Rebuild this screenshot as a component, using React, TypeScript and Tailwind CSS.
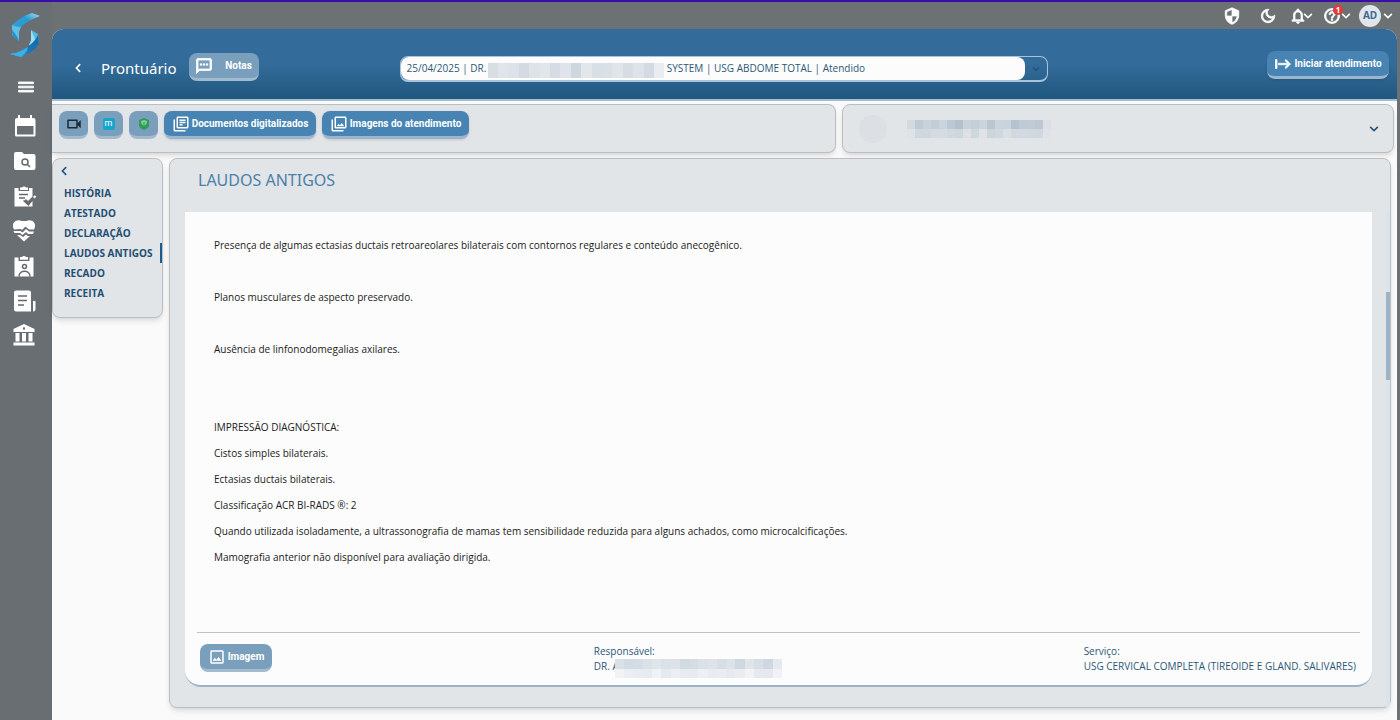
import type { ReactNode } from "react";
import { FaChevronDown, FaChevronLeft } from "react-icons/fa";
import {
  MdHelpOutline,
  MdMenu,
  MdNotificationsNone,
  MdOutlineDarkMode,
  MdOutlineImage,
  MdOutlineLibraryBooks,
  MdOutlinePhotoLibrary,
  MdOutlineSms,
  MdOutlineVideocam,
  MdSecurity,
  MdStart,
} from "react-icons/md";

const sections = ["HISTÓRIA", "ATESTADO", "DECLARAÇÃO", "LAUDOS ANTIGOS", "RECADO", "RECEITA"];

const report = [
  "Presença de algumas ectasias ductais retroareolares bilaterais com contornos regulares e conteúdo anecogênico.",
  "",
  "Planos musculares de aspecto preservado.",
  "",
  "Ausência de linfonodomegalias axilares.",
  "",
  "",
  "IMPRESSÃO DIAGNÓSTICA:",
  "Cistos simples bilaterais.",
  "Ectasias ductais bilaterais.",
  "Classificação ACR BI-RADS ®: 2",
  "Quando utilizada isoladamente, a ultrassonografia de mamas tem sensibilidade reduzida para alguns achados, como microcalcificações.",
  "Mamografia anterior não disponível para avaliação dirigida.",
];

// hidden names are drawn as rows of tinted blocks
const selectMask = [
  ["#d9dee4", "#dfe5ea", "#dce2e8", "#d3dae1", "#dde3e9", "#e1e6eb", "#d5dce3", "#dfe4ea", "#cfd7de", "#e2e7ec", "#d8dfe5", "#d9e0e6", "#e0e5ea", "#d6dde3", "#dde3e8", "#d3dae1", "#e9edf2"],
];

const patientMask = [
  ["#d3d9df", "#bfcad4", "#c9d2da", "#c3cdd7", "#cbd4dc", "#bcc8d3", "#b3c1ce", "#c9d2da", "#c5cfd8", "#cbd3db", "#bac7d2", "#cbd4dc", "#cad2da", "#b5c2cf", "#bfcad4", "#c1cbd5", "#bdc8d3", "#dce0e4"],
  ["#dfe3e7", "#cfd7df", "#cfd7df", "#d5dbe2", "#d4dbe1", "#d1d8df", "#ced6de", "#dde1e6", "#cfd7de", "#dfe3e7", "#ccd4dc", "#d0d8df", "#dbe0e5", "#d1d9e0", "#d2d9e0", "#d1d8df", "#d0d8df", "#dfe3e7"],
];

const doctorMask = [
  ["#d9e0e6", "#d3dbe2", "#d5dde4", "#dbe1e7", "#e0e5ea", "#dae1e7", "#dce2e8", "#d2dae1", "#d5dce3", "#dbe1e7", "#dde3e8", "#d7dee4", "#dce2e8", "#cfd8e0", "#e0e5ea", "#d7dee4", "#cfd8e0", "#e6eaee"],
  ["#f1f3f5", "#eceff2", "#e9edf1", "#e6ebef", "#f0f3f5", "#e5eaee", "#eceff2", "#e8ecf0", "#e7ebef", "#edf0f3", "#e8ecf0", "#e9edf0", "#e6eaee", "#e9edf0", "#f0f2f5", "#e6eaee", "#e4e9ed", "#f0f2f5"],
];

const Mask = ({ rows, className }: { rows: string[][]; className: string }) => (
  <div className={`flex flex-col ${className}`} aria-hidden="true">
    {rows.map((row, r) => (
      <div key={r} className="flex flex-1">
        {row.map((color, c) => (
          <span key={c} className="flex-1" style={{ backgroundColor: color }} />
        ))}
      </div>
    ))}
  </div>
);

const Logo = () => (
  <svg viewBox="0 0 32 46" className="h-[46px] w-8">
    <defs>
      <linearGradient id="logoTop" x1="0" y1="1" x2="1" y2="0">
        <stop offset="0" stopColor="#2b9fd8" />
        <stop offset="0.6" stopColor="#2a9ad2" />
        <stop offset="1" stopColor="#a3e1f5" />
      </linearGradient>
      <linearGradient id="logoBottom" x1="0" y1="1" x2="1" y2="0">
        <stop offset="0" stopColor="#4fc3f2" />
        <stop offset="0.4" stopColor="#1a7ab8" />
        <stop offset="1" stopColor="#1565a0" />
      </linearGradient>
    </defs>
    <path d="M30 3L22 0l-8 3-7 5-5 4v6l9-4c4-4 9-7 19-11z" fill="url(#logoTop)" />
    <path d="M2 12v10l7 6v-9l2-5c-3 0-6-1-9-2z" fill="#5dbfe6" />
    <path d="M2 17c3 3 5 6 7 11l-6-5c-1-2-1-4-1-6z" fill="#2391cb" />
    <path d="M21 17l7 4 1 9-2 4-8-2 2-5z" fill="#56bce6" />
    <path d="M21 17l4 9-1 5-5 1 2-4z" fill="#a0def4" />
    <path d="M28 21l1 10-5 6-5 3-8 4-11-3c9-1 14-4 19-8 4-4 8-7 9-12z" fill="url(#logoBottom)" />
    <path d="M0 41c8-1 13-4 18-7l-1 4-6 6z" fill="#36b2ea" />
  </svg>
);

const RailIcon = ({ children }: { children: ReactNode }) => (
  <svg viewBox="0 0 24 24" className="size-6" fill="#fff">
    {children}
  </svg>
);

const rail = [
  {
    label: "Agenda",
    icon: (
      <path
        fillRule="evenodd"
        d="M5 1h2v3h10V1h2v3h1.500a2 2 0 0 1 2 2v15a1.500 1.500 0 0 1-1.500 1.500H3.500A1.500 1.500 0 0 1 2 21V6a2 2 0 0 1 2-2h1zM4 12v8.500h16.500V12z"
      />
    ),
  },
  {
    label: "Pesquisar prontuários",
    icon: (
      <>
        <path d="M1 5a2 2 0 0 1 2-2h6l2 2h9.500a2 2 0 0 1 2 2v12a2 2 0 0 1-2 2H3a2 2 0 0 1-2-2z" />
        <path d="M12 10a3 3 0 1 1 0 6 3 3 0 0 1 0-6zm2.200 5.200L17 18" fill="none" stroke="#65696d" strokeWidth="1.500" />
      </>
    ),
  },
  {
    label: "Solicitações",
    icon: (
      <>
        <path d="M1.500 4h4v3H16V4h3.500v8.500L15 17l-2-2-2 2 4 4.500.500 1h-14zM7 3.500h2a2.500 2.500 0 0 1 4 0h2v2.500H7zM19.500 17v5.500H15z" />
        <path d="M6 10.500h9M6 14h6" fill="none" stroke="#65696d" strokeWidth="1.500" />
        <path d="M10.500 16.500l4 3.500 5-5" fill="none" stroke="#65696d" strokeWidth="1.500" />
        <path d="M20 13l1.800-1.800 1.500 1.500-1.800 1.800z" />
      </>
    ),
  },
  {
    label: "Sinais vitais",
    icon: (
      <>
        <path d="M1 10.500C-1 7 0 3 3 1.800c2-.800 3.800-.800 5.500.200h5c1.700-1 3.500-1 5.500-.200 3 1.200 4 5.200 2 8.700h-5l-3.500-3-3.500 3.500-1.500-1zM.500 12h7l2 1.500L13 10l3 2.500h5L20 15h-5l-2-2-3.500 3L7 14H1.500zM4 16h3l3 2 3-2.500 1.500 1.500H17L11 22.500z" />
      </>
    ),
  },
  {
    label: "Pacientes",
    icon: (
      <>
        <path d="M1.500 3.500h4V7h11V3.500h4v19h-19zM7 3h2a2.500 2.500 0 0 1 4 0h2v2.800H7z" />
        <circle cx="11.500" cy="12.500" r="2" fill="none" stroke="#65696d" strokeWidth="1.500" />
        <path d="M6 22.500c0-7 11-7 11 0" fill="none" stroke="#65696d" strokeWidth="1.500" />
      </>
    ),
  },
  {
    label: "Relatórios",
    icon: (
      <>
        <path d="M3 1.500h13a2 2 0 0 1 2 2v19H3a2 2 0 0 1-2-2v-17a2 2 0 0 1 2-2zM20 12h2.500v8a2.500 2.500 0 0 1-2.500 2.500z" />
        <path d="M5 7h9M5 11.500h9M5 16h6" stroke="#65696d" strokeWidth="1.500" />
      </>
    ),
  },
  {
    label: "Financeiro",
    icon: (
      <path
        fillRule="evenodd"
        d="M11 0l10.500 5v3H.500V5zM11 3.300a1.200 1.200 0 1 0 0 2.400 1.200 1.200 0 0 0 0-2.400zM2.500 9h4v8.500h-4zM9 9h4v8.500H9zM15.500 9h4v8.500h-4zM.500 18.500h21v3H.500z"
      />
    ),
  },
];

// thickens the outlined Material glyphs without stroking their bounding box
const heavy = "size-[18px] [&>path:not([fill=none])]:stroke-1";

const Sidebar = () => (
  <aside className="flex w-[52px] shrink-0 flex-col items-center bg-[#696e72] pt-[11px] text-white">
    <Logo />
    <button type="button" aria-label="Menu" className="mt-4 mb-2 flex size-6 items-center justify-center">
      <MdMenu className="size-5 [&>path:not([fill=none])]:stroke-1" />
    </button>
    <nav className="flex flex-col pt-px pr-0.5">
      {rail.map((item) => (
        <a key={item.label} href="#" aria-label={item.label} className="flex h-[35px] items-center">
          <RailIcon>{item.icon}</RailIcon>
        </a>
      ))}
    </nav>
  </aside>
);

const TopBar = () => (
  <div className="flex h-[27px] items-center justify-end pr-1 text-white">
    <button type="button" aria-label="Segurança" className="mr-[18px]">
      <MdSecurity className={heavy} />
    </button>
    <button type="button" aria-label="Modo escuro" className="mr-3">
      <MdOutlineDarkMode className={heavy} />
    </button>
    <button type="button" aria-label="Notificações" className="mr-2.5 flex items-center">
      <MdNotificationsNone className={heavy} />
      <FaChevronDown className="-ml-1 size-[10px]" />
    </button>
    <button type="button" aria-label="Ajuda" className="relative mr-2 flex items-center">
      <MdHelpOutline className={heavy} />
      <FaChevronDown className="size-[10px]" />
      <span className="absolute -top-0.5 left-2.5 flex size-[10px] items-center justify-center rounded-full bg-[#e53935] text-[8px] leading-none font-bold">
        1
      </span>
    </button>
    <button type="button" aria-label="Conta" className="flex items-center gap-0.5">
      <span className="flex size-[22px] items-center justify-center rounded-full bg-[#e1e6eb] text-[10px] font-bold text-[#3f6a90]">
        AD
      </span>
      <FaChevronDown className="size-[10px]" />
    </button>
  </div>
);

const button = "flex h-[28px] shrink-0 items-center justify-center rounded-lg border-b-3 font-[Roboto] text-[10px] font-bold text-white";
const softButton = "border-[#a3b9cc] bg-[#7a9fbd]";
const strongButton = "border-[#9ab5cd] bg-[#4784b3] shadow-sm";

const Header = () => (
  <header className="flex h-[72px] items-center rounded-t-xl border-b-2 border-[#a3bcd2] bg-linear-to-b from-[#336c9a] from-50% to-[#20577f] pt-0.5 pr-2 pl-5 text-white">
    <button type="button" aria-label="Voltar" className="mt-1.5 flex w-3 justify-center">
      <FaChevronLeft className="size-[10px]" />
    </button>
    <h1 className="mt-1.5 ml-[17px] text-[15px]">Prontuário</h1>
    <button type="button" className={`${button} ${softButton} mt-1 ml-3 w-[70px] gap-3`}>
      <MdOutlineSms className={heavy} />
      Notas
    </button>
    <div className="relative mt-2 mr-auto ml-[141px] flex h-[26px] max-w-[648px] flex-1 rounded-lg border border-b-2 border-[#a9c3da]">
      <select
        aria-label="Atendimento"
        className="min-w-0 flex-1 appearance-none rounded-lg bg-[#fcfcfc] pl-1.5 font-['Open_Sans'] text-[10px] text-[#2c5878]"
      >
        <option>{`25/04/2025 | DR. A${"\u00a0".repeat(66)}SYSTEM | USG ABDOME TOTAL | Atendido`}</option>
      </select>
      <span className="flex w-[22px] items-center justify-center">
        <FaChevronDown className="size-2 text-[#20517a]" />
      </span>
      <Mask rows={selectMask} className="absolute top-[6px] left-[87px] h-[15px] w-[177px]" />
    </div>
    <button type="button" className={`${button} ${strongButton} w-[122px] gap-0.5`}>
      <MdStart className={heavy} />
      Iniciar atendimento
    </button>
  </header>
);

const panel = "border border-[#bcbfc2] bg-[#e1e5e8] shadow-md";

const Toolbar = () => (
  <div className="flex gap-1.5 pr-[3px]">
    <div className={`${panel} flex h-[49px] w-[58.4%] shrink-0 gap-1.5 rounded-r-lg border-l-0 pt-1.5 pl-[7px]`}>
      <button type="button" aria-label="Teleconsulta" className={`${button} ${softButton} w-[29px]`}>
        <MdOutlineVideocam className="size-[18px] text-[#1d2a33]" />
      </button>
      <button type="button" aria-label="Memed" className={`${button} ${softButton} w-[29px]`}>
        <span className="flex h-3 w-3 items-center justify-center rounded-xs bg-[#16a4cc] text-[9px] leading-none font-normal">
          m
        </span>
      </button>
      <button type="button" aria-label="Certificado digital" className={`${button} ${softButton} w-[29px]`}>
        <svg viewBox="0 0 12 12" className="size-3">
          <path d="M6 0l5 2v5c0 2-2 4-5 5-3-1-5-3-5-5V2z" fill="#2f9a5c" />
          <path d="M3 3l3-1 3 1c0 3-1 4-3 5-2-1-3-2-3-5z" fill="#7ccf8e" />
          <path d="M6 4v5" stroke="#2f9a5c" />
        </svg>
      </button>
      <button type="button" className={`${button} ${strongButton} w-[152px] gap-0.5`}>
        <MdOutlineLibraryBooks className="size-[18px]" />
        Documentos digitalizados
      </button>
      <button type="button" className={`${button} ${strongButton} w-[147px] gap-0.5`}>
        <MdOutlinePhotoLibrary className="size-[18px]" />
        Imagens do atendimento
      </button>
    </div>
    <div className={`${panel} flex h-[49px] flex-1 items-center rounded-lg pr-3.5 pl-4`}>
      <span className="size-7 rounded-full bg-[#dce0e5]" />
      <Mask rows={patientMask} className="ml-5 h-[18px] w-[144px]" />
      <button type="button" aria-label="Expandir paciente" className="ml-auto text-[#1f527c]">
        <FaChevronDown className="size-[10px]" />
      </button>
    </div>
  </div>
);

const SectionMenu = () => (
  <nav className={`${panel} h-[160px] w-[111px] shrink-0 rounded-lg pt-[7px]`}>
    <button type="button" aria-label="Recolher" className="ml-1.5 flex h-[17px] items-start text-[#1f527c]">
      <FaChevronLeft className="size-[10px]" />
    </button>
    <ul className="font-['Open_Sans'] text-[10px] leading-5 font-bold whitespace-nowrap text-[#1f4e73]">
      {sections.map((name) => (
        <li key={name}>
          <a
            href="#"
            className={name === "LAUDOS ANTIGOS" ? "block border-r-2 border-[#1f5a90] pl-[11px]" : "block pl-[11px]"}
          >
            {name}
          </a>
        </li>
      ))}
    </ul>
  </nav>
);

const ReportPanel = () => (
  <section className={`${panel} flex flex-1 flex-col rounded-lg pl-[15px]`}>
    <h2 className="h-[53px] pl-[13px] text-[16px] leading-[42px] text-[#4d7fa9]">LAUDOS ANTIGOS</h2>
    <div className="flex">
      <article className="mb-5 flex-1 rounded-b-2xl border-b-2 border-[#9db3c5] bg-[#fcfcfc] px-3 pt-5 font-['Open_Sans'] text-[10px]">
        <div className="pl-[17px] text-[#1b1b1b]">
          {report.map((line, i) => (
            <p key={i} className="h-[26px] leading-[26px]">
              {line}
            </p>
          ))}
        </div>
        <footer className="mt-[62px] flex justify-between border-t border-[#c2c2c2] pt-[11px] pr-1 pb-[11px] pl-[3px] leading-[15px] text-[#2c5878]">
          <button type="button" className={`${button} ${softButton} w-[72px] gap-0.5`}>
            <MdOutlineImage className="size-[18px]" />
            Imagem
          </button>
          <div>
            <p>Responsável:</p>
            <div className="relative w-[168px]">
              DR. A
              <Mask rows={doctorMask} className="absolute top-0 left-[21px] h-[19px] w-[167px]" />
            </div>
          </div>
          <div>
            <p>Serviço:</p>
            <p>USG CERVICAL COMPLETA (TIREOIDE E GLAND. SALIVARES)</p>
          </div>
        </footer>
      </article>
      <div className="ml-3.5 w-1 rounded-br-lg bg-[#d9e4ed] pt-20">
        <div className="h-[88px] bg-[#9fb3c7]" />
      </div>
    </div>
  </section>
);

export default function App() {
  return (
    <div className="flex min-h-screen border-t-2 border-[#3a0ca8] bg-[#6c7174] font-['Noto_Sans',sans-serif]">
      <Sidebar />
      <main className="flex min-w-0 flex-1 flex-col pr-[3px]">
        <TopBar />
        <div className="flex flex-1 flex-col rounded-t-xl bg-[#fafafa]">
          <Header />
          <div className="flex flex-col gap-[5px] pt-[3px]">
            <Toolbar />
            <div className="flex items-start gap-1.5 pr-1.5">
              <SectionMenu />
              <ReportPanel />
            </div>
          </div>
        </div>
      </main>
    </div>
  );
}
